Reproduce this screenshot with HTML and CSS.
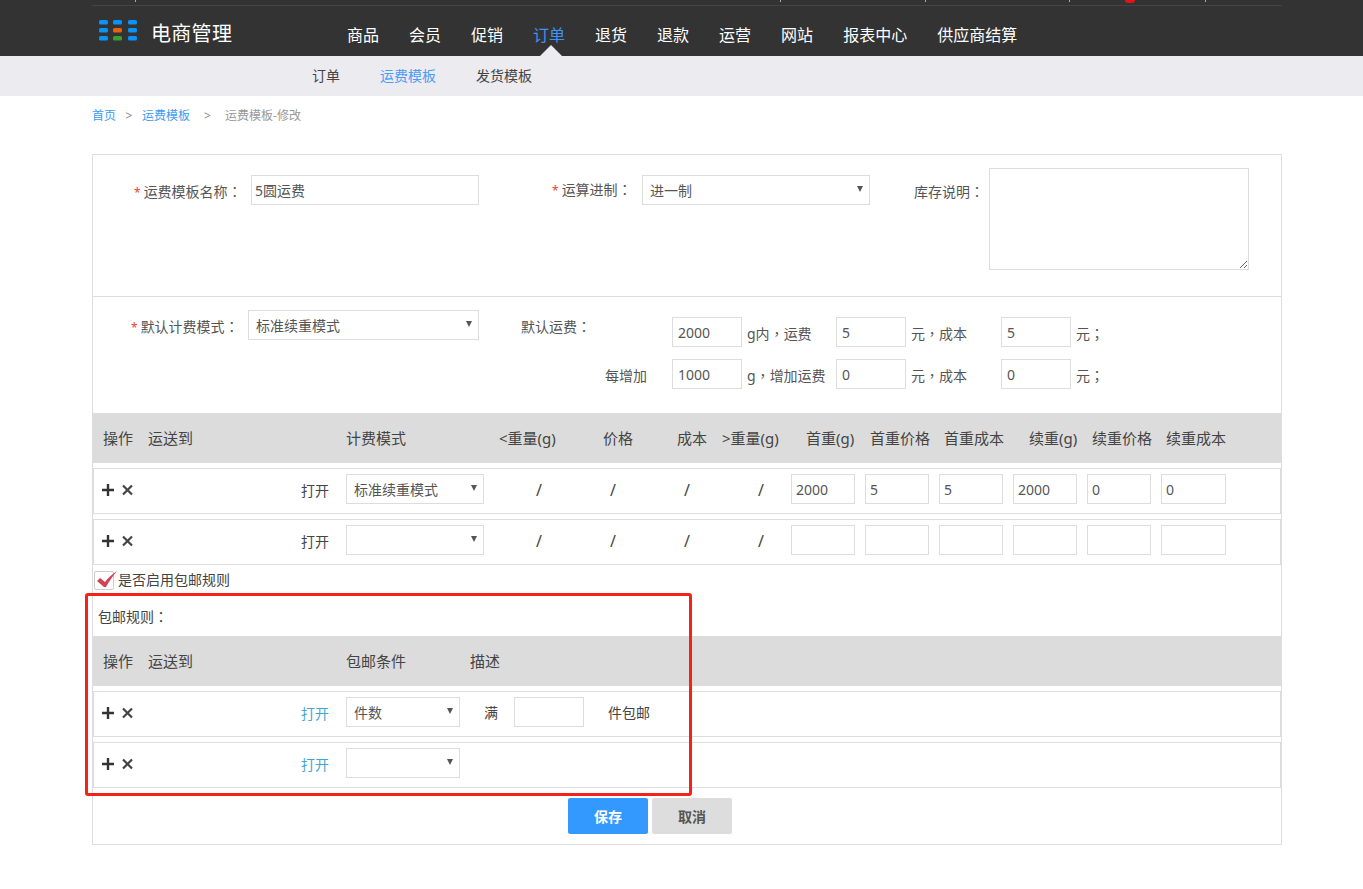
FILE: index.html
```html
<!DOCTYPE html>
<html lang="zh-CN">
<head>
    <meta charset="UTF-8">
    <title>运费模板-修改</title>
    <link rel="stylesheet" href="styles.css">
</head>
<body>
    <div class="header">
        <div class="topbar">
            <i class="tick tick-1"></i><i class="tick tick-2"></i><i class="tick tick-3"></i><i class="tick tick-4"></i><i class="dot"></i><i class="tick tick-5"></i>
        </div>
        <div class="header-main">
            <div class="logo">
                <svg width="38" height="22" viewBox="0 0 38 22">
                    <g fill="#0a93fb">
                        <rect x="0" y="0" width="9" height="4.5" rx="1.5"/><rect x="14" y="0" width="9" height="4.5" rx="1.5"/><rect x="29" y="0" width="9" height="4.5" rx="1.5"/>
                        <rect x="0" y="8" width="9" height="4.5" rx="1.5"/><rect x="29" y="8" width="9" height="4.5" rx="1.5"/>
                        <rect x="0" y="16" width="9" height="4.5" rx="1.5"/><rect x="29" y="16" width="9" height="4.5" rx="1.5"/>
                    </g>
                    <rect x="14" y="8" width="9" height="4.5" rx="1.5" fill="#e8620c"/>
                    <rect x="14" y="16" width="9" height="4.5" rx="1.5" fill="#3a9f2c"/>
                </svg>
                <span class="logo-text">电商管理</span>
            </div>
            <div class="nav">
                <a>商品</a><a>会员</a><a>促销</a><a class="active">订单</a><a>退货</a><a>退款</a><a>运营</a><a>网站</a><a>报表中心</a><a>供应商结算</a>
            </div>
        </div>
    </div>
    <div class="subnav">
        <a>订单</a><a class="active">运费模板</a><a>发货模板</a>
    </div>

    <div class="page">
        <div class="crumbs">
            <a>首页</a><span class="sep">&gt;</span><a>运费模板</a><span class="sep sep-2">&gt;</span><span class="current">运费模板-修改</span>
        </div>

        <div class="box">
            <div class="sec sec-1">
                <label class="lbl lbl-name"><em>*</em>运费模板名称<b lang="zh-TW">：</b></label>
                <input class="inp inp-name" type="text" value="5圆运费">
                <label class="lbl lbl-carry"><em>*</em>运算进制<b lang="zh-TW">：</b></label>
                <span class="sel sel-carry"><select><option>进一制</option></select></span>
                <label class="lbl lbl-stock">库存说明<b lang="zh-TW">：</b></label>
                <textarea class="stock"></textarea>
            </div>

            <div class="sec sec-2">
                <label class="lbl lbl-mode"><em>*</em>默认计费模式<b lang="zh-TW">：</b></label>
                <span class="sel sel-mode"><select><option>标准续重模式</option></select></span>
                <label class="lbl lbl-fee">默认运费<b lang="zh-TW">：</b></label>
                <div class="fee-grid">
                    <span class="fee-cap"></span>
                    <input class="inp fee" type="text" value="2000"><span>g内<b lang="zh-TW">，</b>运费</span>
                    <input class="inp fee" type="text" value="5"><span>元<b lang="zh-TW">，</b>成本</span>
                    <input class="inp fee" type="text" value="5"><span>元<b lang="zh-TW">；</b></span>
                    <span class="fee-cap">每增加</span>
                    <input class="inp fee" type="text" value="1000"><span>g<b lang="zh-TW">，</b>增加运费</span>
                    <input class="inp fee" type="text" value="0"><span>元<b lang="zh-TW">，</b>成本</span>
                    <input class="inp fee" type="text" value="0"><span>元<b lang="zh-TW">；</b></span>
                </div>
            </div>

            <div class="thead fee-cols">
                <div class="th-ops"><span>操作</span><span>运送到</span></div>
                <div>计费模式</div>
                <div class="pl-4">&lt;重量(g)</div>
                <div class="pl-34">价格</div>
                <div class="pl-34">成本</div>
                <div class="pl-5">&gt;重量(g)</div>
                <div class="pl-15">首重(g)</div>
                <div class="pl-5">首重价格</div>
                <div class="pl-5">首重成本</div>
                <div class="pl-16">续重(g)</div>
                <div class="pl-5">续重价格</div>
                <div class="pl-5">续重成本</div>
            </div>
            <div class="trow fee-cols">
                <div class="ops">
                    <svg class="ico" width="32" height="14" viewBox="0 0 32 14"><path d="M1 7H13M7 1V13" stroke="#333" stroke-width="2.4" fill="none"/><path d="M22 2.5L31 11.5M31 2.5L22 11.5" stroke="#444" stroke-width="2.2" fill="none"/></svg>
                    <a class="open">打开</a>
                </div>
                <span class="sel sel-wide"><select><option>标准续重模式</option></select></span>
                <div class="slash">/</div><div class="slash">/</div><div class="slash">/</div><div class="slash">/</div>
                <input class="inp cell" type="text" value="2000">
                <input class="inp cell" type="text" value="5">
                <input class="inp cell" type="text" value="5">
                <input class="inp cell" type="text" value="2000">
                <input class="inp cell" type="text" value="0">
                <input class="inp cell last" type="text" value="0">
            </div>
            <div class="trow fee-cols">
                <div class="ops">
                    <svg class="ico" width="32" height="14" viewBox="0 0 32 14"><path d="M1 7H13M7 1V13" stroke="#333" stroke-width="2.4" fill="none"/><path d="M22 2.5L31 11.5M31 2.5L22 11.5" stroke="#444" stroke-width="2.2" fill="none"/></svg>
                    <a class="open">打开</a>
                </div>
                <span class="sel sel-wide"><select><option></option></select></span>
                <div class="slash">/</div><div class="slash">/</div><div class="slash">/</div><div class="slash">/</div>
                <input class="inp cell" type="text">
                <input class="inp cell" type="text">
                <input class="inp cell" type="text">
                <input class="inp cell" type="text">
                <input class="inp cell" type="text">
                <input class="inp cell last" type="text">
            </div>

            <div class="check-row">
                <span class="check">
                    <svg width="24" height="20" viewBox="0 0 24 20"><path d="M1 11L4 8L9 12C12 8 16 4 21 1C17 6 13 11 10 17L8 17Z" fill="#d0415a"/></svg>
                </span>
                <span>是否启用包邮规则</span>
            </div>

            <div class="free-title">包邮规则<b lang="zh-TW">：</b></div>
            <div class="thead free-head">
                <div class="th-ops"><span>操作</span><span>运送到</span></div>
                <div class="free-cond">包邮条件</div>
                <div>描述</div>
            </div>
            <div class="trow free-row">
                <div class="ops">
                    <svg class="ico" width="32" height="14" viewBox="0 0 32 14"><path d="M1 7H13M7 1V13" stroke="#333" stroke-width="2.4" fill="none"/><path d="M22 2.5L31 11.5M31 2.5L22 11.5" stroke="#444" stroke-width="2.2" fill="none"/></svg>
                    <a class="open blue">打开</a>
                </div>
                <span class="sel sel-free"><select><option>件数</option></select></span>
                <span class="man">满</span>
                <input class="inp fee" type="text">
                <span class="unit">件包邮</span>
            </div>
            <div class="trow free-row">
                <div class="ops">
                    <svg class="ico" width="32" height="14" viewBox="0 0 32 14"><path d="M1 7H13M7 1V13" stroke="#333" stroke-width="2.4" fill="none"/><path d="M22 2.5L31 11.5M31 2.5L22 11.5" stroke="#444" stroke-width="2.2" fill="none"/></svg>
                    <a class="open blue">打开</a>
                </div>
                <span class="sel sel-free"><select><option></option></select></span>
            </div>

            <div class="actions">
                <button class="btn btn-save">保存</button>
                <button class="btn btn-cancel">取消</button>
            </div>

            <div class="mark"></div>
        </div>
    </div>
</body>
</html>
```

FILE: styles.css
```css
* {
    box-sizing: border-box;
}
body {
    margin: 0;
    font-family: "Noto Sans", "Noto Sans CJK SC", sans-serif;
    font-size: 14px;
    color: #555;
    background: #fff;
}
a {
    text-decoration: none;
    cursor: pointer;
}
b {
    /* full width punctuation sits in the middle of its cell here */
    font-family: "Noto Sans CJK TC", sans-serif;
    font-weight: normal;
}
input, select, textarea, button {
    font-family: inherit;
}

/* header */
.header {
    height: 56px;
    background: #333;
}
.topbar {
    display: flex;
    align-items: flex-start;
    width: 1190px;
    height: 6px;
    margin-left: 92px;
    border-bottom: 1px solid #444;
}
.tick {
    display: block;
    width: 1px;
    height: 2px;
    background: #aaa;
}
.tick-1 { margin-left: 43px; }
.tick-2 { margin-left: 644px; }
.tick-3 { margin-left: 144px; }
.tick-4 { margin-left: 143px; }
.tick-5 { margin-left: 70px; }
.dot {
    display: block;
    width: 10px;
    height: 3px;
    margin-left: 55px;
    background: #e01515;
    border-radius: 0 0 5px 5px;
}
.header-main {
    display: flex;
    height: 50px;
    padding-left: 99px;
}
.logo {
    display: flex;
    width: 248px;
    padding-top: 14px;
}
.logo-text {
    margin-left: 14px;
    font-size: 20px;
    line-height: 27px;
    letter-spacing: .3px;
    color: #fff;
}
.nav {
    display: flex;
    gap: 30px;
}
.nav a {
    position: relative;
    font-size: 16px;
    line-height: 58px;
    height: 50px;
    color: #fff;
}
.nav a.active {
    color: #3d94f6;
}
.nav a.active::after {
    content: "";
    position: absolute;
    left: 7px;
    bottom: 0;
    border-left: 11px solid transparent;
    border-right: 11px solid transparent;
    border-bottom: 11px solid #ebebf0;
}
.subnav {
    display: flex;
    gap: 40px;
    height: 40px;
    padding-left: 312px;
    line-height: 40px;
    background: #ebebf0;
    color: #444;
}
.subnav a.active {
    color: #4a9cf5;
}

/* page */
.page {
    width: 1190px;
    margin-left: 92px;
}
.crumbs {
    display: flex;
    height: 58px;
    padding-top: 11px;
    font-size: 12px;
    line-height: 18px;
    color: #999;
}
.crumbs a {
    color: #3d9bf5;
}
.sep {
    width: 26px;
    text-align: center;
    color: #888;
}
.sep-2 {
    width: 35px;
}
.box {
    position: relative;
    height: 691px;
    border: 1px solid #ddd;
}

/* form parts */
.lbl em {
    margin-right: 3px;
    font-size: 12px;
    font-style: normal;
    color: #e6432f;
}
.inp {
    height: 30px;
    padding: 0 4px;
    border: 1px solid #ddd;
    font-size: 14px;
    color: #555;
    background: #fff;
    outline: none;
}
.sel {
    position: relative;
    display: block;
    height: 30px;
}
.sel select {
    width: 100%;
    height: 100%;
    padding: 0 7px;
    border: 1px solid #ddd;
    border-radius: 0;
    font-size: 14px;
    color: #555;
    background: #fff;
    appearance: none;
    outline: none;
}
.sel::after {
    content: "";
    position: absolute;
    right: 7px;
    top: 11px;
    border-left: 3.5px solid transparent;
    border-right: 3.5px solid transparent;
    border-top: 6px solid #555;
}
.sec {
    display: flex;
    align-items: flex-start;
    border-bottom: 1px solid #ddd;
}
.sec-1 {
    height: 142px;
    padding-left: 41px;
}
.lbl-name {
    width: 117px;
    padding-top: 26px;
}
.inp-name {
    width: 228px;
    margin-top: 20px;
    padding-left: 3px;
}
.lbl-carry {
    width: 90px;
    margin-left: 73px;
    padding-top: 24px;
}
.sel-carry {
    width: 228px;
    margin-top: 20px;
}
.lbl-stock {
    width: 75px;
    margin-left: 44px;
    padding-top: 26px;
}
.stock {
    width: 260px;
    height: 102px;
    margin-top: 13px;
    border: 1px solid #ddd;
    outline: none;
}
.sec-2 {
    height: 116px;
    padding-left: 38px;
    border-bottom: 0;
}
.lbl-mode {
    width: 117px;
    padding-top: 19px;
}
.sel-mode {
    width: 231px;
    margin-top: 13px;
}
.lbl-fee {
    width: 76px;
    margin-left: 42px;
    padding-top: 19px;
}
.fee-grid {
    display: grid;
    grid-template-columns: 75px 70px 94px 70px 95px 70px auto;
    grid-template-rows: 30px 30px;
    row-gap: 12px;
    align-items: center;
    margin-top: 20px;
    line-height: 26px;
}
.fee-grid span {
    padding: 3px 0 0 5px;
}
.fee-grid .fee-cap {
    padding-left: 8px;
}
.fee {
    width: 70px;
    padding-left: 5px;
}

/* tables */
.thead {
    height: 50px;
    margin-bottom: 5px;
    font-size: 15px;
    line-height: 50px;
    color: #444;
    background: #dcdcdc;
}
.fee-cols {
    display: grid;
    grid-template-columns: 253px 149px repeat(4, 74px) repeat(6, 74px);
}
.th-ops {
    display: flex;
    gap: 15px;
    padding-left: 10px;
}
.pl-4 { padding-left: 4px; }
.pl-5 { padding-left: 5px; }
.pl-15 { padding-left: 15px; }
.pl-16 { padding-left: 16px; }
.pl-34 { padding-left: 34px; }
.trow {
    height: 46px;
    margin-bottom: 5px;
    padding-bottom: 4px;
    border: 1px solid #ddd;
    align-items: center;
}
.trow.fee-cols {
    grid-template-columns: 252px 149px repeat(4, 74px) repeat(6, 74px);
}
.ops {
    display: flex;
    align-items: center;
    justify-content: space-between;
    margin-top: 1px;
    padding: 0 17px 0 7px;
}
.open {
    color: #444;
}
.open.blue {
    color: #45a5cc;
}
.sel-wide {
    width: 138px;
}
.slash {
    margin-top: 1px;
    padding-left: 41px;
    font-size: 16px;
    color: #444;
}
.cell {
    width: 64px;
}
.cell.last {
    width: 65px;
}
.check-row {
    display: flex;
    align-items: center;
    gap: 4px;
    height: 20px;
    line-height: 20px;
    color: #444;
}
.check {
    position: relative;
    display: block;
    width: 20px;
    height: 19px;
    margin-left: 1px;
    border: 1px solid #ccc;
    border-radius: 2px;
}
.check svg {
    position: absolute;
    left: 1px;
    top: -2px;
}
.free-title {
    height: 46px;
    padding: 16px 0 0 5px;
    line-height: 20px;
    color: #444;
}
.free-head {
    display: flex;
}
.free-head .th-ops {
    width: 253px;
}
.free-cond {
    width: 124px;
}
.free-row {
    display: flex;
}
.free-row .ops {
    width: 252px;
}
.sel-free {
    width: 114px;
}
.man {
    margin-left: 24px;
    width: 30px;
    color: #444;
}
.unit {
    margin-left: 24px;
    color: #444;
}
.actions {
    display: flex;
    gap: 4px;
    margin-top: 10px;
    padding-left: 475px;
}
.btn {
    width: 80px;
    height: 36px;
    border: 0;
    border-radius: 2px;
    font-size: 14px;
    font-weight: bold;
    cursor: pointer;
}
.btn-save {
    color: #fff;
    background: #39f;
}
.btn-cancel {
    color: #555;
    background: #ddd;
}

/* red note drawn over the screenshot */
.mark {
    position: absolute;
    left: -8px;
    top: 438px;
    width: 607px;
    height: 203px;
    border: 3px solid #f5221a;
    border-radius: 3px;
    pointer-events: none;
}
```
